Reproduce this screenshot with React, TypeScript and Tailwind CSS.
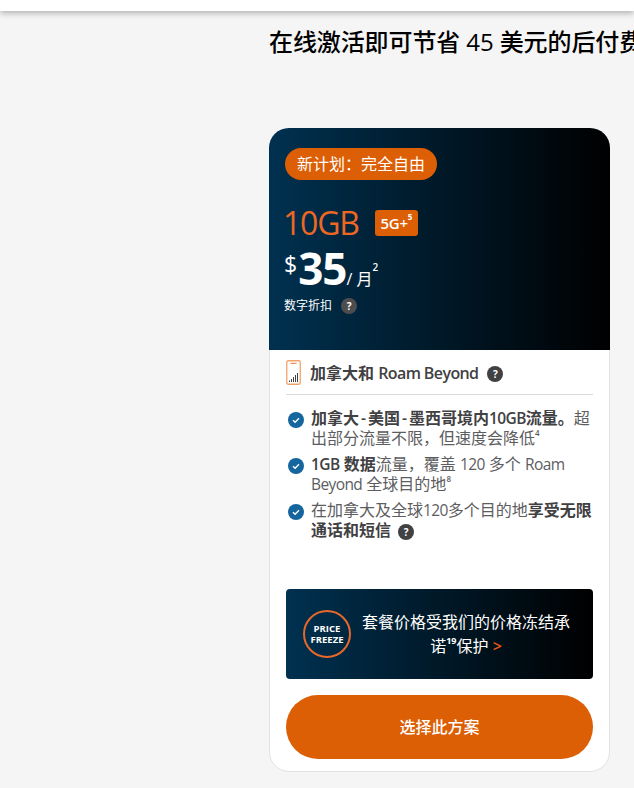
import React from "react";

const font = { fontFamily: '"Open Sans", "Noto Sans CJK SC", sans-serif' };

function Help({ dark = true, className = "" }: { dark?: boolean; className?: string }) {
  return (
    <span
      className={`inline-flex h-4 w-4 items-center justify-center rounded-full align-middle text-[10px] leading-none font-bold text-white ${
        dark ? "bg-[#414042]" : "bg-[#4d4d4d]"
      } ${className}`}
    >
      ?
    </span>
  );
}

function Check() {
  return (
    <svg width="16" height="16" viewBox="0 0 16 16" className="mt-1 shrink-0">
      <circle cx="8" cy="8" r="8" fill="#15659f" />
      <path d="M5 8.2 L7.1 10.2 L11 6.2" fill="none" stroke="#fff" strokeWidth="1.4" />
    </svg>
  );
}

function Phone() {
  return (
    <svg width="15" height="25" viewBox="0 0 15 25" className="shrink-0">
      <rect x="0.75" y="0.75" width="13.5" height="23.5" rx="1.5" fill="#fff" stroke="#f2a36c" strokeWidth="1.3" />
      <path d="M4.5 3.3 H10.5" stroke="#e8773a" strokeWidth="1" />
      <path d="M3.5 22 V20.5 M5.5 22 V19 M7.5 22 V17 M9.5 22 V15 M11.5 22 V13" stroke="#414042" strokeWidth="1" />
    </svg>
  );
}

function L({ children }: { children: React.ReactNode }) {
  return <span className="text-[15.5px] tracking-[-0.6px]">{children}</span>;
}

function Dash() {
  return <span className="mx-[2px] text-[15.5px]">-</span>;
}

export default function App() {
  return (
    <div className="h-[788px] w-[634px] overflow-hidden bg-[#f5f5f5]" style={font}>
      <div className="h-[11px] bg-white shadow-[0_2px_6px_rgba(0,0,0,0.3)]" />
      <div className="pl-[269px]">
        <h1 className="mt-[13px] h-[36px] text-[24px] leading-[36px] font-medium tracking-[-0.1px] whitespace-nowrap text-black">
          在线激活即可节省 45 美元的后付费套餐
        </h1>
        <div className="mt-[68px] flex h-[644px] w-[341px] flex-col rounded-[20px] border border-[#e2e2e2] bg-white">
          <div className="-mx-px -mt-px h-[222px] shrink-0 rounded-t-[20px] bg-[linear-gradient(90deg,#003150,#000)] px-4 pt-5 text-white">
            <div className="flex h-8 w-[152px] items-center justify-center rounded-full bg-[#dc5e05] text-base leading-none">
              新计划：完全自由
            </div>
            <div className="mt-[13px] flex h-[60px] items-center">
              <span className="-ml-[2px] text-[32px] leading-none font-normal tracking-[-1.2px] text-[#ee6723]">10GB</span>
              <span className="ml-4 flex h-[26px] w-[43px] items-center justify-center rounded-[3px] bg-[#dc5e05] text-[15px] leading-none font-semibold tracking-[-0.3px]">
                5G+<sup className="-mt-1 text-[8px] font-bold">5</sup>
              </span>
            </div>
            <div className="-mt-[7px] flex h-[45px] items-start">
              <span className="mt-[4px] -ml-px text-[23px] leading-[28px]">$</span>
              <span className="ml-px text-[44px] leading-[45px] font-bold tracking-[-1px]">35</span>
              <span className="mt-[23px] text-[16px] leading-[20px]">/ 月</span>
              <span className="mt-[16px] text-[10px] leading-none font-semibold">2</span>
            </div>
            <div className="mt-[6px] -ml-px flex items-center text-[12px] leading-[18px]">
              数字折扣
              <Help dark={false} className="ml-[9px]" />
            </div>
          </div>

          <div className="flex flex-1 flex-col px-4 text-[#414042]">
            <div className="flex h-[45px] items-center gap-[9px] border-b border-[#d9d9d9] pt-[2px] pb-[2px]">
              <Phone />
              <span className="mt-[2px] text-[16px] leading-none font-semibold">
                加拿大和 <span className="tracking-[-0.6px]">Roam Beyond</span>
              </span>
              <Help className="mt-[3px]" />
            </div>
            <ul className="mt-[13px] flex flex-col gap-[6px] text-[16px] leading-[20px] text-[#5d5d5f]">
              <li className="flex items-start gap-[7px] pl-[2px]">
                <Check />
                <span className="w-[282px]">
                  <b className="font-semibold text-[#414042]">
                    加拿大<Dash />美国<Dash />墨西哥境内<L>10GB</L>流量。
                  </b>
                  超出部分流量不限，但速度会降低<sup className="align-[4px] text-[8px] leading-none font-semibold">4</sup>
                </span>
              </li>
              <li className="flex items-start gap-[7px] pl-[2px]">
                <Check />
                <span className="w-[282px]">
                  <b className="font-semibold text-[#414042]">
                    <L>1GB</L> 数据
                  </b>
                  流量，覆盖 <L>120</L> 多个 <L>Roam Beyond</L> 全球目的地<sup className="align-[4px] text-[8px] leading-none font-semibold">8</sup>
                </span>
              </li>
              <li className="flex items-start gap-[7px] pl-[2px]">
                <Check />
                <span className="w-[282px]">
                  在加拿大及全球<L>120</L>多个目的地<b className="font-semibold text-[#414042]">享受无限通话和短信</b>
                  <Help className="ml-[7px]" />
                </span>
              </li>
            </ul>

            <div className="mt-auto flex h-[90px] items-center rounded-[4px] bg-[linear-gradient(90deg,#003150,#000)] pl-[17px] text-white">
              <div className="flex h-12 w-12 shrink-0 flex-col items-center justify-center rounded-full border-2 border-[#e8672a] text-[9.5px] leading-[11px] font-bold">
                <span>PRICE</span>
                <span>FREEZE</span>
              </div>
              <div className="ml-[4px] w-[222px] text-center text-[16px] leading-[24px]">
                套餐价格受我们的价格冻结承诺<sup className="align-[4px] text-[9px] leading-none font-bold">19</sup>保护 <span className="font-semibold text-[#ee5a12]">&gt;</span>
              </div>
            </div>
            <div className="mt-4 mb-3 flex h-16 items-center justify-center rounded-full bg-[#dc5e05] text-[16px] leading-none font-medium text-white">
              选择此方案
            </div>
          </div>
        </div>
      </div>
    </div>
  );
}
